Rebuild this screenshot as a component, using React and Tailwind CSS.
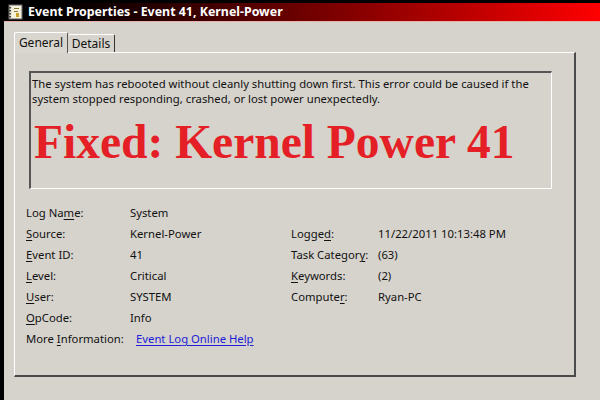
import React from "react";

const ui = { fontFamily: '"Noto Sans", "Open Sans", sans-serif' };

function Key({ text, k }) {
  // underline the access-key letter at index k
  return (
    <span>
      {text.slice(0, k)}
      <span className="underline underline-offset-2">{text[k]}</span>
      {text.slice(k + 1)}
    </span>
  );
}

function EventIcon() {
  return (
    <svg width="16" height="16" viewBox="0 0 16 16">
      <rect x="2" y="1" width="13" height="14" fill="#e9e4d0" stroke="#6b6b6b" strokeWidth="1" />
      <rect x="5" y="2" width="9" height="12" fill="#f5f1dc" />
      {[3, 6, 9, 12].map((y) => (
        <rect key={y} x="1" y={y} width="3" height="1.5" fill="#444" />
      ))}
      <rect x="7" y="4" width="5" height="1" fill="#8a7a3a" />
      <rect x="7" y="7" width="4" height="1" fill="#8a7a3a" />
      <rect x="9" y="9" width="3" height="4" fill="#c9a227" />
    </svg>
  );
}

const rows = [
  [["Log Name:", 6], "System", null, null],
  [["Source:", 0], "Kernel-Power", ["Logged:", 5], "11/22/2011 10:13:48 PM"],
  [["Event ID:", 0], "41", ["Task Category:", 12], "(63)"],
  [["Level:", 0], "Critical", ["Keywords:", 0], "(2)"],
  [["User:", 0], "SYSTEM", ["Computer:", 7], "Ryan-PC"],
  [["OpCode:", 0], "Info", null, null],
];

export default function App() {
  return (
    <div
      className="w-[600px] h-[400px] bg-[#d6d3cc] border-l-[4px] border-t-[3px] border-black flex flex-col overflow-hidden text-[#111]"
      style={ui}
    >
      {/* title bar */}
      <div className="h-[19px] shrink-0 flex items-center gap-[5px] pl-[3px] bg-gradient-to-r from-black via-[#6e0000] to-[#ff0000] border-b border-[#e8b0a8]">
        <EventIcon />
        <span className="text-white font-bold text-[12.4px] leading-none">
          Event Properties - Event 41, Kernel-Power
        </span>
      </div>

      <div className="pl-[10px] pt-[9px]">
        {/* tabs */}
        <div className="flex items-end h-[21px] text-[12px]">
          <div className="h-[21px] w-[54px] bg-[#d9d6cf] border-t border-l border-white border-r border-r-[#555] rounded-t-[2px] flex items-center justify-center relative z-10 -mb-px">
            General
          </div>
          <div className="h-[18px] w-[47px] border-t border-white border-r border-r-[#333] rounded-t-[2px] flex items-center justify-center">
            Details
          </div>
        </div>

        {/* pane */}
        <div className="w-[562px] h-[325px] border-t border-l border-white border-r-2 border-b-2 border-r-[#4a4a4a] border-b-[#4a4a4a]">
          <div className="ml-[14px] mt-[18px] w-[523px] h-[118px] border-t-2 border-l-2 border-[#555] border-r border-b border-r-white border-b-white px-[1px] pt-[3px]">
            <p className="text-[11.3px] leading-[15px]">
              The system has rebooted without cleanly shutting down first. This error could be caused if the
              system stopped responding, crashed, or lost power unexpectedly.
            </p>
            <div
              className="text-[#e41f26] font-bold text-[47.5px] leading-none mt-[13px] ml-[2px]"
              style={{ fontFamily: '"Liberation Serif", serif' }}
            >
              Fixed: Kernel Power 41
            </div>
          </div>

          <div className="mt-[14px] ml-[11px] grid grid-cols-[104px_161px_87px_1fr] auto-rows-[21px] items-center text-[11.3px]">
            {rows.map(([l, v, l2, v2], i) => (
              <React.Fragment key={i}>
                <Key text={l[0]} k={l[1]} />
                <span>{v}</span>
                {l2 ? <Key text={l2[0]} k={l2[1]} /> : <span />}
                <span>{v2}</span>
              </React.Fragment>
            ))}
            <Key text="More Information:" k={5} />
            <span className="col-span-3 pl-[6px]">
              <a className="text-[#2020d8] underline underline-offset-2">Event Log Online Help</a>
            </span>
          </div>
        </div>
      </div>
    </div>
  );
}
